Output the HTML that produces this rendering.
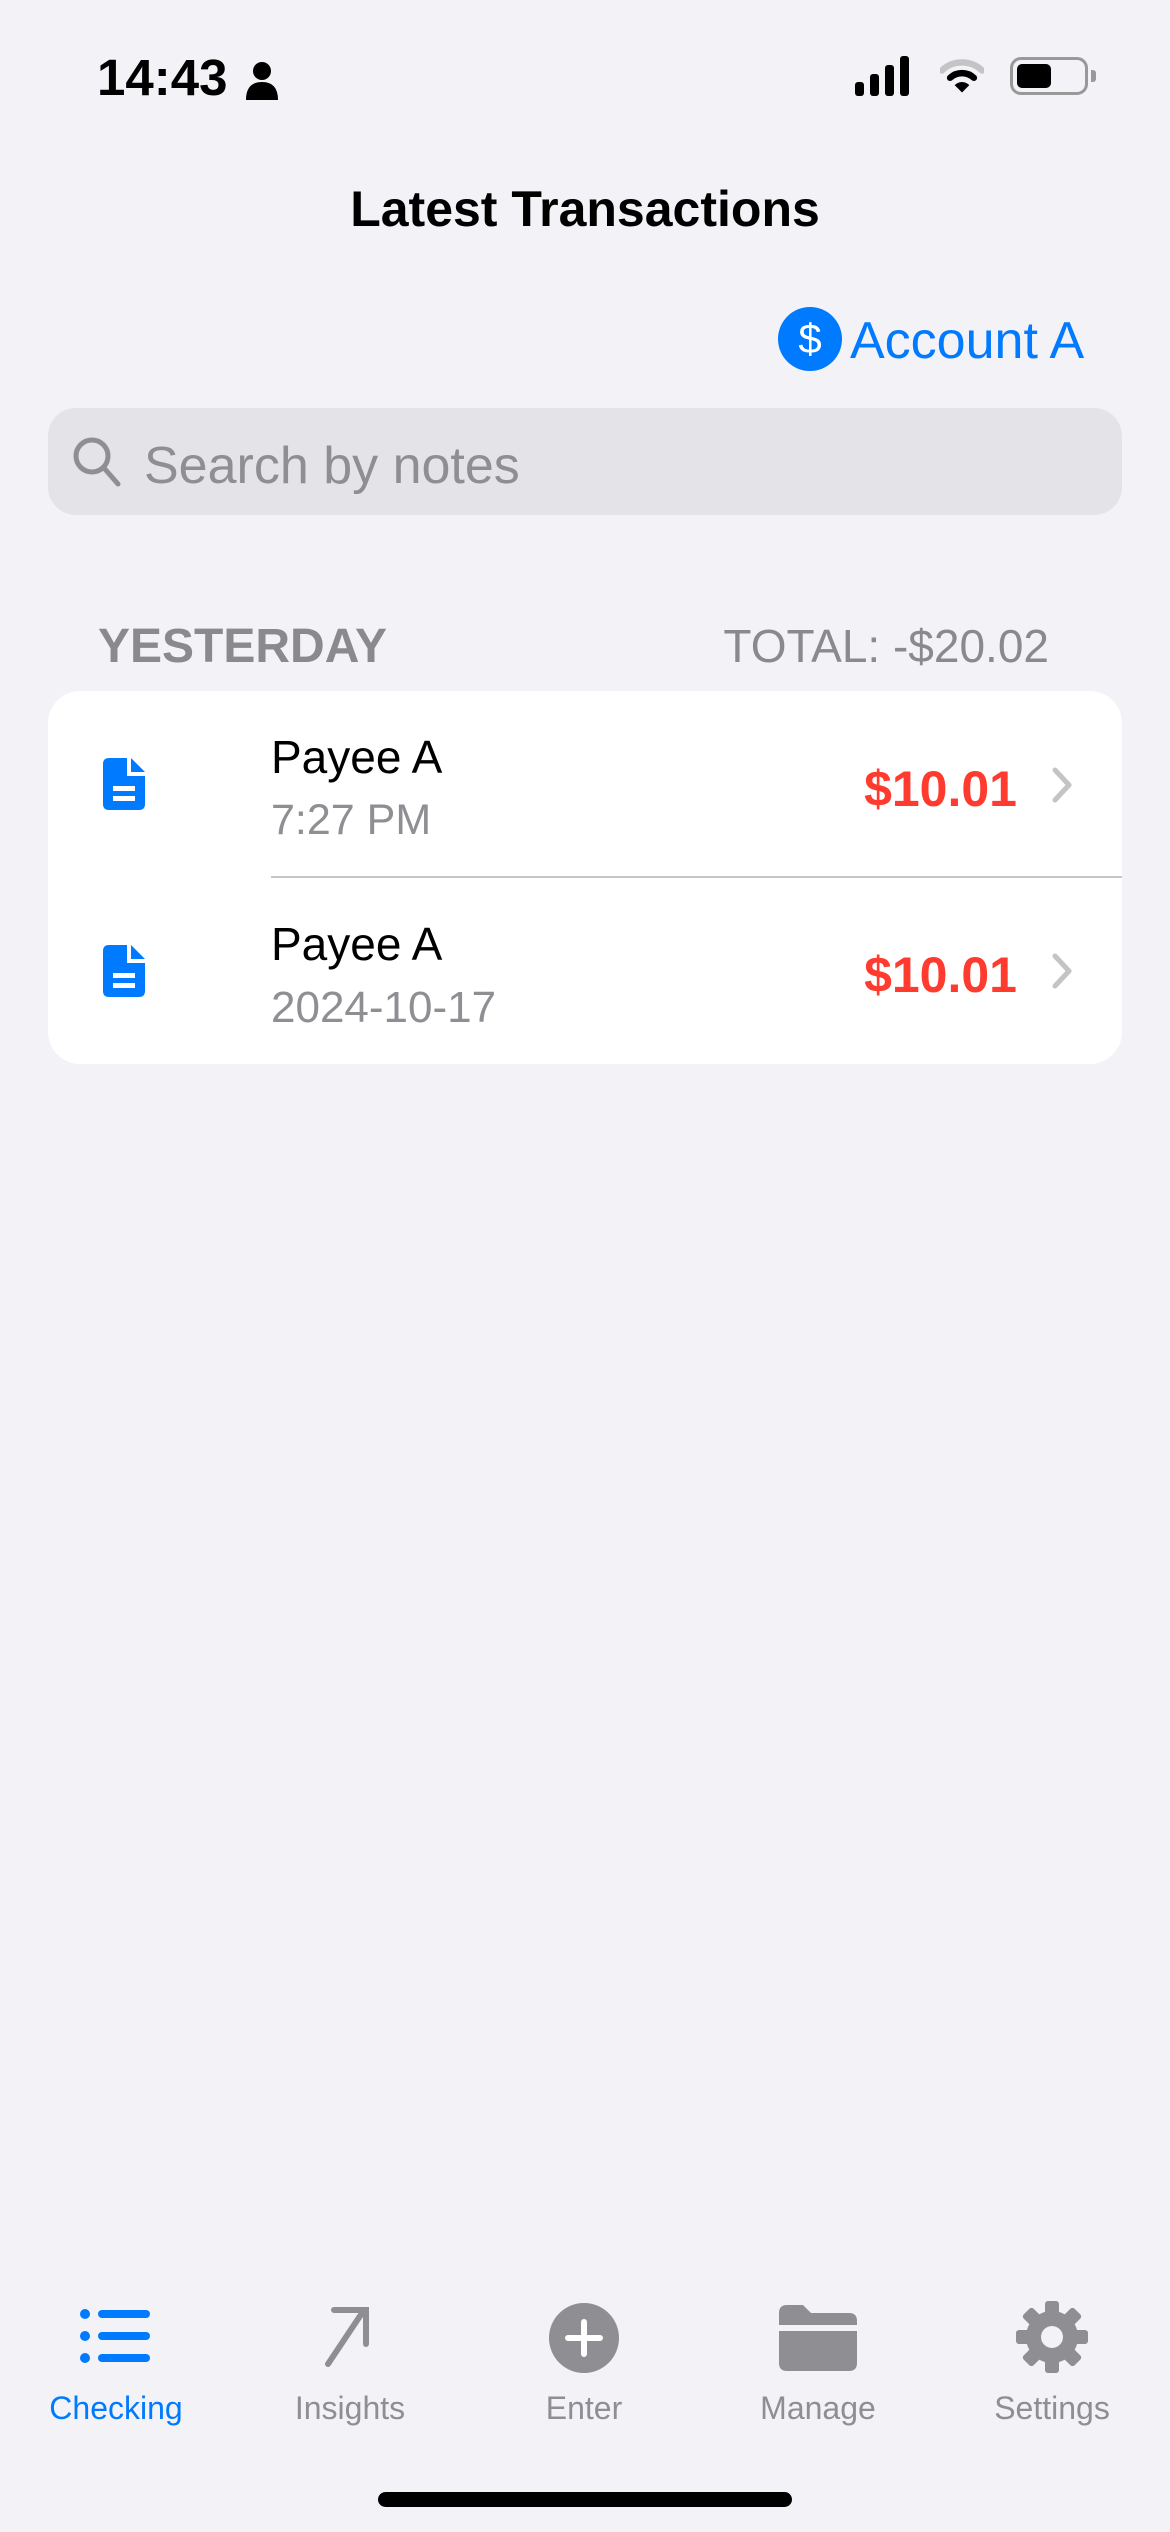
<!DOCTYPE html>
<html><head><meta charset="utf-8"><style>
*{margin:0;padding:0;box-sizing:border-box}
body{width:1170px;height:2532px;background:#f2f2f7;font-family:"Liberation Sans",sans-serif;position:relative;overflow:hidden}
.a{position:absolute;white-space:nowrap}
</style></head><body>
<div class="a" style="left:97px;top:48px;font-size:51px;font-weight:bold;color:#000">14:43</div>
<svg class="a" style="left:244px;top:60px" width="36" height="40" viewBox="0 0 36 40"><circle cx="18" cy="11" r="9" fill="#000"/><path d="M2 40 Q2 22 18 22 Q34 22 34 40Z" fill="#000"/></svg>
<svg class="a" style="left:855px;top:56px" width="60" height="40" viewBox="0 0 60 40"><rect x="0" y="26" width="9" height="14" rx="3"/><rect x="15" y="18" width="9" height="22" rx="3"/><rect x="30" y="9" width="9" height="31" rx="3"/><rect x="45" y="0" width="9" height="40" rx="3"/></svg>
<svg class="a" style="left:940px;top:56px" width="44" height="40" viewBox="0 0 48 40"><path d="M2 14 A32 32 0 0 1 46 14" stroke="#c4c4c6" stroke-width="7" fill="none" stroke-linecap="round"/><path d="M11 22 A19 19 0 0 1 37 22" stroke="#000" stroke-width="7" fill="none" stroke-linecap="round"/><path d="M24 38 L16 30 A11 11 0 0 1 32 30Z" fill="#000"/></svg>
<div class="a" style="left:1010px;top:57px;width:78px;height:38px;border:3px solid #999;border-radius:11px"></div>
<div class="a" style="left:1017px;top:64px;width:34px;height:24px;background:#000;border-radius:5px"></div>
<div class="a" style="left:1091px;top:70px;width:5px;height:12px;background:#999;border-radius:0 3px 3px 0"></div>

<div class="a" style="left:0;width:1170px;text-align:center;top:180px;font-size:50px;font-weight:bold;color:#000">Latest Transactions</div>

<div class="a" style="left:778px;top:307px;width:64px;height:64px;border-radius:50%;background:#007aff;color:#fff;font-size:42px;text-align:center;line-height:64px">$</div>
<div class="a" style="left:850px;top:311px;font-size:52px;color:#007aff">Account A</div>

<div class="a" style="left:48px;top:408px;width:1074px;height:107px;background:#e3e3e8;border-radius:28px"></div>
<svg class="a" style="left:70px;top:434px" width="56" height="56" viewBox="0 0 56 56"><circle cx="22" cy="22" r="16" stroke="#8e8e93" stroke-width="5" fill="none"/><path d="M34 34 L48 50" stroke="#8e8e93" stroke-width="5" stroke-linecap="round"/></svg>
<div class="a" style="left:144px;top:436px;font-size:52px;color:#8e8e93">Search by notes</div>

<div class="a" style="left:98px;top:619px;font-size:48px;font-weight:bold;color:#8a8a8e">YESTERDAY</div>
<div class="a" style="right:121px;top:619px;font-size:46px;color:#8a8a8e">TOTAL: -$20.02</div>

<div class="a" style="left:48px;top:691px;width:1074px;height:373px;background:#fff;border-radius:32px"></div>
<div class="a" style="left:271px;top:876px;width:851px;height:2px;background:#c6c6c8"></div>

<svg class="a" style="left:103px;top:758px" width="42" height="52" viewBox="0 0 42 52"><path d="M6 0 H24 V18 H42 V46 Q42 52 36 52 H6 Q0 52 0 46 V6 Q0 0 6 0Z M28 0 L42 14 H28Z" fill="#007aff"/><rect x="10" y="28" width="22" height="5" fill="#fff"/><rect x="10" y="38" width="22" height="5" fill="#fff"/></svg>
<svg class="a" style="left:103px;top:945px" width="42" height="52" viewBox="0 0 42 52"><path d="M6 0 H24 V18 H42 V46 Q42 52 36 52 H6 Q0 52 0 46 V6 Q0 0 6 0Z M28 0 L42 14 H28Z" fill="#007aff"/><rect x="10" y="28" width="22" height="5" fill="#fff"/><rect x="10" y="38" width="22" height="5" fill="#fff"/></svg>

<div class="a" style="left:271px;top:730px;font-size:46px;color:#000">Payee A</div>
<div class="a" style="left:271px;top:796px;font-size:43px;color:#8e8e93">7:27 PM</div>
<div class="a" style="right:153px;top:760px;font-size:50px;font-weight:bold;color:#ff3b30">$10.01</div>
<svg class="a" style="left:1050px;top:766px" width="26" height="38" viewBox="0 0 26 38"><path d="M5 4 L19 19 L5 34" stroke="#c4c4c7" stroke-width="5" fill="none" stroke-linecap="round" stroke-linejoin="round"/></svg>

<div class="a" style="left:271px;top:917px;font-size:46px;color:#000">Payee A</div>
<div class="a" style="left:271px;top:983px;font-size:44px;color:#8e8e93">2024-10-17</div>
<div class="a" style="right:153px;top:946px;font-size:50px;font-weight:bold;color:#ff3b30">$10.01</div>
<svg class="a" style="left:1050px;top:952px" width="26" height="38" viewBox="0 0 26 38"><path d="M5 4 L19 19 L5 34" stroke="#c4c4c7" stroke-width="5" fill="none" stroke-linecap="round" stroke-linejoin="round"/></svg>

<svg class="a" style="left:80px;top:2308px" width="72" height="56" viewBox="0 0 72 56"><circle cx="5" cy="6" r="5" fill="#007aff"/><circle cx="5" cy="28" r="5" fill="#007aff"/><circle cx="5" cy="50" r="5" fill="#007aff"/><rect x="18" y="2" width="52" height="8" rx="4" fill="#007aff"/><rect x="18" y="24" width="52" height="8" rx="4" fill="#007aff"/><rect x="18" y="46" width="52" height="8" rx="4" fill="#007aff"/></svg>
<svg class="a" style="left:320px;top:2304px" width="60" height="64" viewBox="0 0 60 64"><path d="M8 60 L44 6 M14 6 H46 V40" stroke="#8e8e93" stroke-width="6" fill="none" stroke-linecap="round"/></svg>
<svg class="a" style="left:548px;top:2302px" width="72" height="72" viewBox="0 0 72 72"><circle cx="36" cy="36" r="35" fill="#8e8e93"/><path d="M36 20 V52 M20 36 H52" stroke="#fff" stroke-width="6" stroke-linecap="round"/></svg>
<svg class="a" style="left:779px;top:2305px" width="78" height="66" viewBox="0 0 78 66"><path d="M0 8 Q0 0 8 0 H24 L32 8 H70 Q78 8 78 16 V20 H0Z" fill="#8e8e93"/><path d="M0 26 H78 V58 Q78 66 70 66 H8 Q0 66 0 58Z" fill="#8e8e93"/></svg>
<svg class="a" style="left:1016px;top:2301px" width="72" height="72" viewBox="0 0 72 72"><g fill="#8e8e93" transform="translate(36 36)"><circle r="26"/><g id="t"><rect x="-7" y="-36" width="14" height="16" rx="3"/></g><use href="#t" transform="rotate(45)"/><use href="#t" transform="rotate(90)"/><use href="#t" transform="rotate(135)"/><use href="#t" transform="rotate(180)"/><use href="#t" transform="rotate(225)"/><use href="#t" transform="rotate(270)"/><use href="#t" transform="rotate(315)"/></g><circle cx="36" cy="36" r="11" fill="#f2f2f7"/></svg>

<div class="a" style="left:16px;width:200px;text-align:center;top:2390px;font-size:32px;color:#007aff">Checking</div>
<div class="a" style="left:250px;width:200px;text-align:center;top:2390px;font-size:32px;color:#8e8e93">Insights</div>
<div class="a" style="left:484px;width:200px;text-align:center;top:2390px;font-size:32px;color:#8e8e93">Enter</div>
<div class="a" style="left:718px;width:200px;text-align:center;top:2390px;font-size:32px;color:#8e8e93">Manage</div>
<div class="a" style="left:952px;width:200px;text-align:center;top:2390px;font-size:32px;color:#8e8e93">Settings</div>

<div class="a" style="left:378px;top:2492px;width:414px;height:15px;background:#000;border-radius:8px"></div>
</body></html>
